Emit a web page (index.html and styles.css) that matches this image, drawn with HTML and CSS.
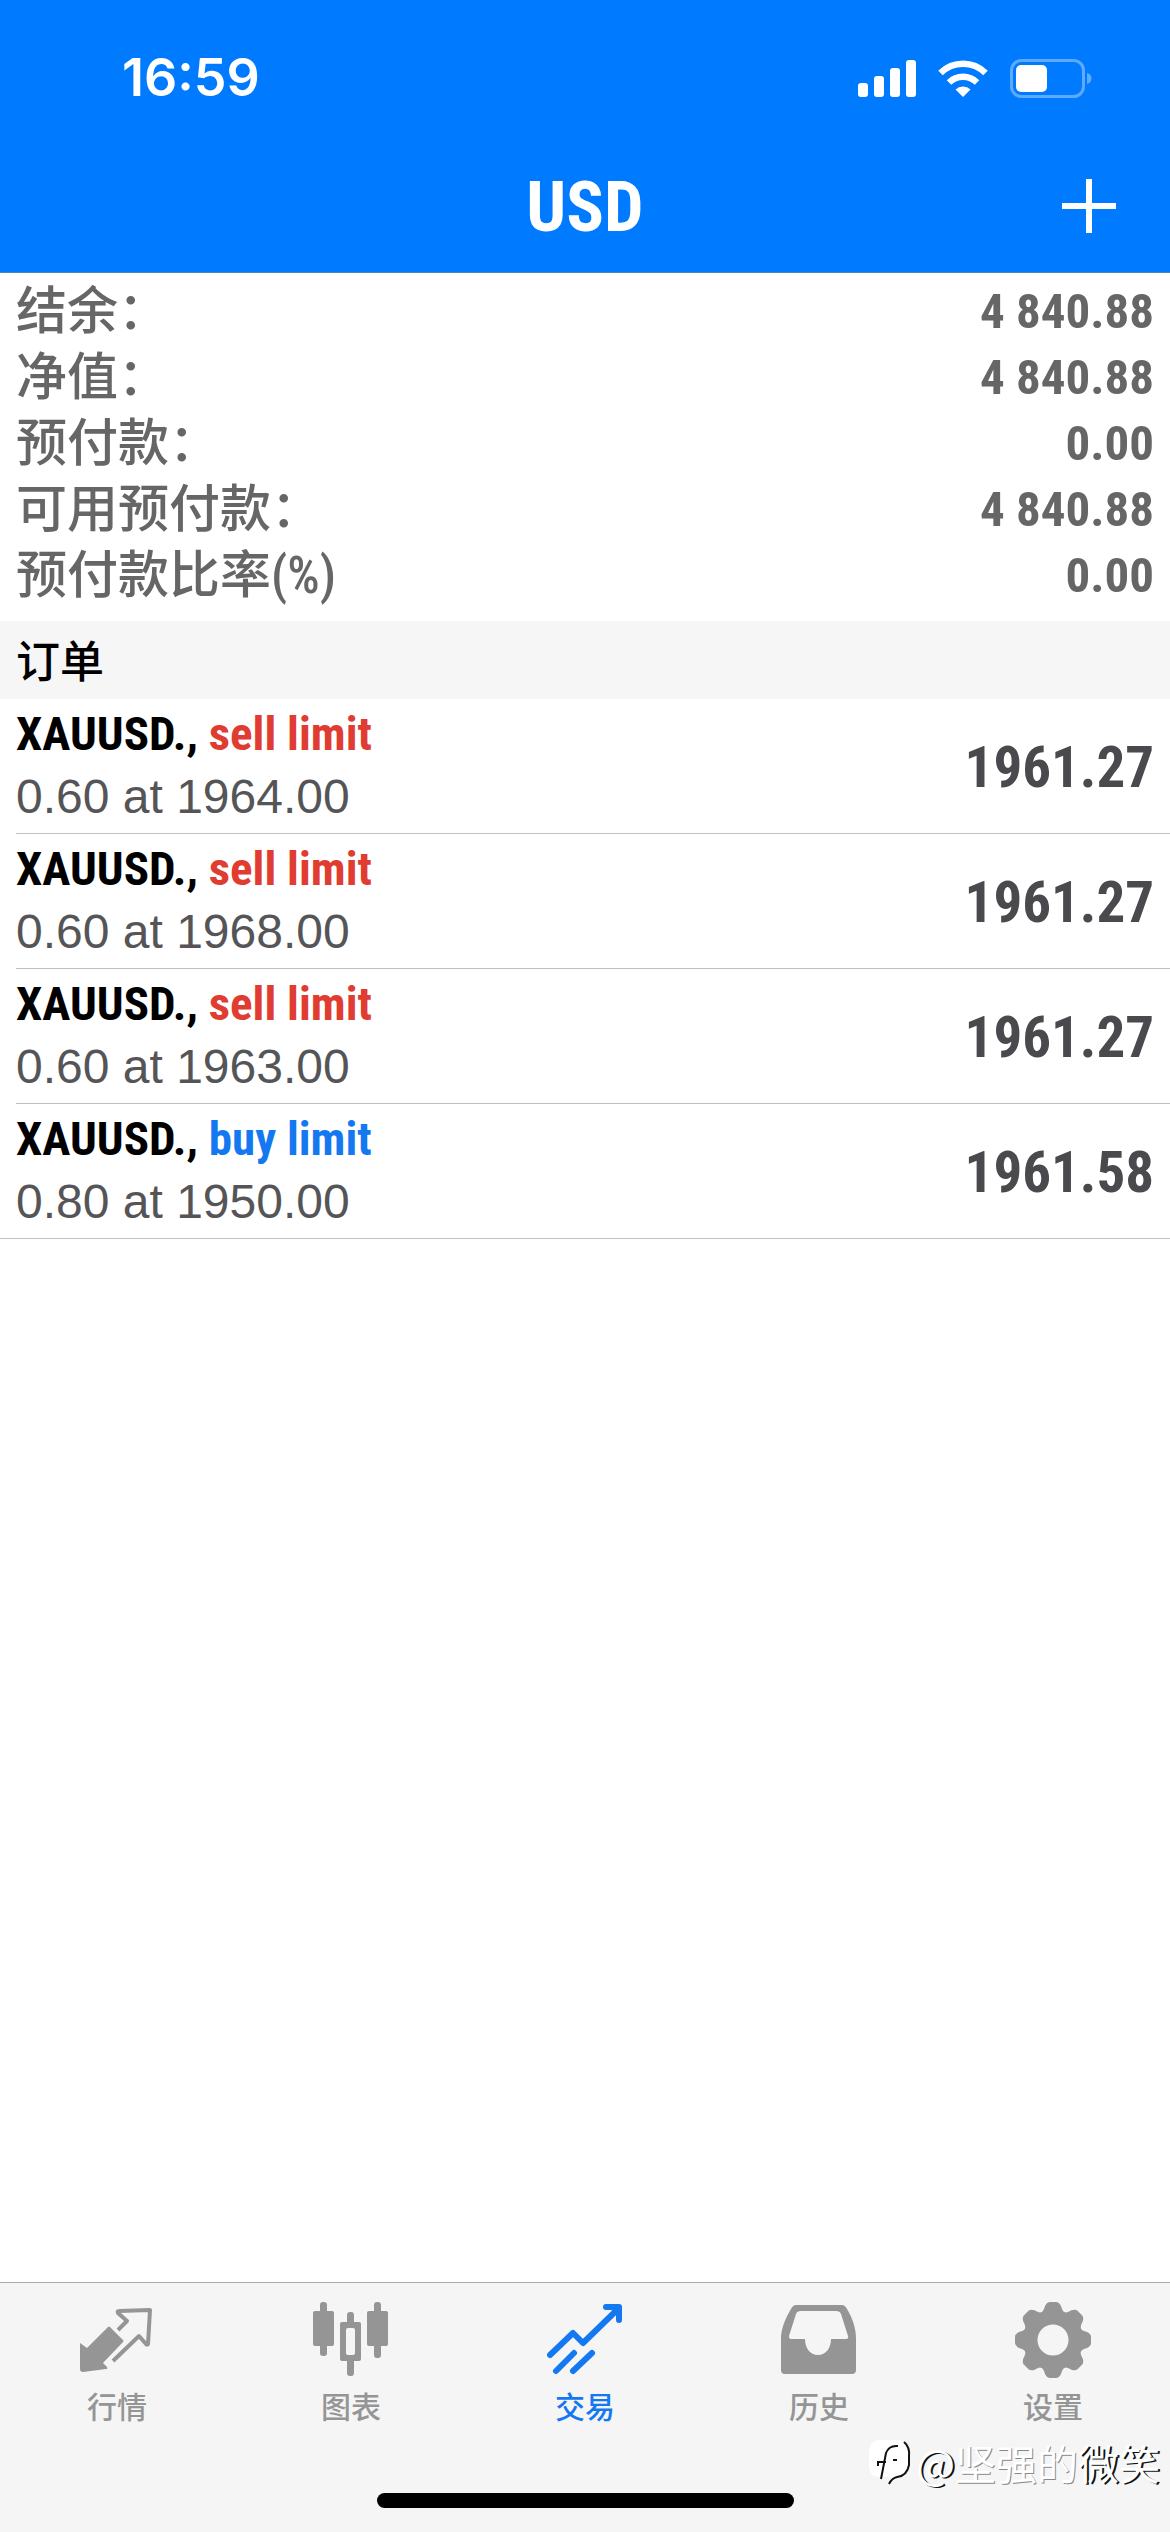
FILE: index.html
```html
<!DOCTYPE html>
<html lang="zh-CN">
<head>
<meta charset="utf-8">
<meta name="viewport" content="width=device-width, initial-scale=1">
<title>USD</title>
<link rel="stylesheet" href="styles.css">
</head>
<body>
<div class="app">
  <header class="header">
    <div class="status">
      <time class="clock">16:59</time>
      <div class="indicators">
        <svg class="signal" viewBox="0 0 58 37" width="58" height="37" fill="#fff" aria-hidden="true">
          <rect x="0" y="23" width="10" height="14" rx="3"/>
          <rect x="16" y="16" width="10" height="21" rx="3"/>
          <rect x="32" y="8" width="10" height="29" rx="3"/>
          <rect x="48" y="0" width="10" height="37" rx="3"/>
        </svg>
        <svg class="wifi" viewBox="0 0 50 37" width="50" height="37" aria-hidden="true">
          <path d="M2.500 13A32 32 0 0 1 47.500 13" fill="none" stroke="#fff" stroke-width="6.500"/>
          <path d="M11 22.500A20 20 0 0 1 39 22.500" fill="none" stroke="#fff" stroke-width="6.500"/>
          <path d="M17.500 29.500A11 11 0 0 1 32.500 29.500L25 37z" fill="#fff"/>
        </svg>
        <svg class="battery" viewBox="0 0 83 39" width="83" height="39" aria-hidden="true">
          <rect x="1.500" y="1.500" width="72" height="36" rx="10" fill="none" stroke="#5cabff" stroke-width="3"/>
          <path d="M77 14c6 1 6 10 0 11z" fill="#5cabff"/>
          <rect x="6" y="6" width="31" height="27" rx="5" fill="#fff"/>
        </svg>
      </div>
    </div>
    <div class="titlebar">
      <h1 class="title">USD</h1>
      <button class="add" type="button" aria-label="新订单">
        <svg viewBox="0 0 54 54" width="54" height="54" aria-hidden="true"><path d="M27 0v54M0 27h54" stroke="#fff" stroke-width="6"/></svg>
      </button>
    </div>
  </header>

  <main class="content">
    <dl class="account">
      <div class="account-row"><dt>结余：</dt><dd>4 840.88</dd></div>
      <div class="account-row"><dt>净值：</dt><dd>4 840.88</dd></div>
      <div class="account-row"><dt>预付款：</dt><dd>0.00</dd></div>
      <div class="account-row"><dt>可用预付款：</dt><dd>4 840.88</dd></div>
      <div class="account-row"><dt>预付款比率(%)</dt><dd>0.00</dd></div>
    </dl>
    <h2 class="section">订单</h2>
    <ul class="orders">
      <li class="order">
        <div class="order-info"><p class="symbol">XAUUSD., <span class="sell">sell limit</span></p><p class="volume">0.60 at 1964.00</p></div>
        <span class="price">1961.27</span>
      </li>
      <li class="order">
        <div class="order-info"><p class="symbol">XAUUSD., <span class="sell">sell limit</span></p><p class="volume">0.60 at 1968.00</p></div>
        <span class="price">1961.27</span>
      </li>
      <li class="order">
        <div class="order-info"><p class="symbol">XAUUSD., <span class="sell">sell limit</span></p><p class="volume">0.60 at 1963.00</p></div>
        <span class="price">1961.27</span>
      </li>
      <li class="order">
        <div class="order-info"><p class="symbol">XAUUSD., <span class="buy">buy limit</span></p><p class="volume">0.80 at 1950.00</p></div>
        <span class="price">1961.58</span>
      </li>
    </ul>
  </main>

  <footer class="footer">
    <nav class="tabs">
      <a class="tab" href="#quotes">
        <svg viewBox="0 0 76 76" width="76" height="76" aria-hidden="true">
          <path d="M1 41l7 5 21-21q1-1 2 0l13 13q1 1 0 2L24 61l4 4q1 2-1 2L4 70q-3 0-3-3z" fill="currentColor"/>
          <path d="M39 28l9-9-9-8q-1-2 1-2L71 8 69 42q-1 1-2 0L60 34 34 59" fill="none" stroke="currentColor" stroke-width="4" stroke-linejoin="round"/>
        </svg>
        <span>行情</span>
      </a>
      <a class="tab" href="#chart">
        <svg viewBox="0 0 76 76" width="76" height="76" aria-hidden="true">
          <g fill="currentColor">
            <rect x="7" y="0" width="7" height="54" rx="3"/><rect x="0" y="9" width="21" height="35" rx="2"/>
            <rect x="61" y="0" width="7" height="56" rx="3"/><rect x="54" y="9" width="21" height="35" rx="2"/>
            <rect x="34" y="10" width="7" height="14" rx="3"/><rect x="34" y="54" width="7" height="20" rx="3"/>
            <path fill-rule="evenodd" d="M29 20h17q2 0 2 2v35q0 2-2 2H29q-2 0-2-2V22q0-2 2-2zm6 6q-2 0-2 2v23q0 2 2 2h5q2 0 2-2V28q0-2-2-2z"/>
          </g>
        </svg>
        <span>图表</span>
      </a>
      <a class="tab active" href="#trade" aria-current="page">
        <svg viewBox="0 0 76 76" width="76" height="76" aria-hidden="true">
          <g fill="none" stroke="currentColor" stroke-width="6" stroke-linecap="round" stroke-linejoin="round">
            <path d="M3 53L26 31l10 10L72 6"/><path d="M59 5h13v13"/><path d="M9 69l18-18M26 69l19-18"/>
          </g>
          <path d="M62 5h10v12z" fill="currentColor"/>
        </svg>
        <span>交易</span>
      </a>
      <a class="tab" href="#history">
        <svg viewBox="0 0 76 76" width="76" height="76" aria-hidden="true">
          <path fill-rule="evenodd" fill="currentColor" d="M15 3h46q3 0 5 4c6 10 9 20 9 30v31q0 4-4 4H4q-4 0-4-4V37C0 27 4 17 10 7q2-4 5-4zm5 6q-4 0-5 3L8 34q0 3 2 3h14c0 9 5 16 13 16s13-7 13-16h15q3 0 2-3L60 12q-1-3-5-3z"/>
        </svg>
        <span>历史</span>
      </a>
      <a class="tab" href="#settings">
        <svg viewBox="0 0 76 76" width="76" height="76" aria-hidden="true">
          <g fill="currentColor">
            <path fill-rule="evenodd" d="M38 9a29 29 0 1 0 0 58a29 29 0 1 0 0-58zm0 13.500a15.500 15.500 0 1 1 0 31a15.500 15.500 0 1 1 0-31z"/>
            <path id="tooth" d="M25 11q3-1 4-4l1-3q2-4 5-4h6q3 0 5 4l1 3q1 3 4 4l-3 6H28z"/>
            <use href="#tooth" transform="rotate(45 38 38)"/>
            <use href="#tooth" transform="rotate(90 38 38)"/>
            <use href="#tooth" transform="rotate(135 38 38)"/>
            <use href="#tooth" transform="rotate(180 38 38)"/>
            <use href="#tooth" transform="rotate(225 38 38)"/>
            <use href="#tooth" transform="rotate(270 38 38)"/>
            <use href="#tooth" transform="rotate(315 38 38)"/>
          </g>
        </svg>
        <span>设置</span>
      </a>
    </nav>
    <div class="home-indicator"></div>
    <div class="watermark">
      <svg viewBox="0 0 48 48" width="48" height="48" aria-hidden="true">
        <path d="M10 2h22q9 2 9 14v10q0 12-12 13l-6 6-1-6H10Q1 38 1 28V14Q1 4 10 2z" fill="#fff"/>
        <g fill="none" stroke="#111" stroke-width="2"><path d="M36 4q6 5 5 14v9q-2 11-12 12-5 1-8 7"/><path d="M13 41l5-26q3-8 12-7M10 28v-4h8M25 22h4"/></g>
      </svg>
      <span>@<span class="faint">坚强的</span>微笑</span>
    </div>
  </footer>
</div>
</body>
</html>
```

FILE: styles.css
```css
* {
  box-sizing: border-box;
}

body,
h1,
h2,
p,
ul,
dl,
dd {
  margin: 0;
  padding: 0;
}

body {
  background: #fff;
  color: #000;
  font-family: "Liberation Sans", "Noto Sans CJK SC", sans-serif;
}

.app {
  display: flex;
  flex-direction: column;
  min-height: 100vh;
}

/* Header */
.header {
  background: #007aff;
  border-bottom: 1px solid #4a84c4;
  color: #fff;
}

.status {
  display: flex;
  align-items: center;
  justify-content: space-between;
  height: 156px;
  padding: 0 77px 0 122px;
}

.clock {
  font: 600 52px/60px Inter, sans-serif;
}

.indicators {
  display: flex;
  align-items: center;
  gap: 22px;
}

.titlebar {
  display: grid;
  grid-template-columns: 1fr auto 1fr;
  align-items: center;
  height: 116px;
  padding: 0 54px 16px;
}

.title {
  grid-column: 2;
  padding-top: 2px;
  font: bold 70px/98px "Roboto Condensed", Roboto, sans-serif;
}

.add {
  justify-self: end;
  display: flex;
  padding: 0;
  border: 0;
  background: none;
}

/* Account summary */
.content {
  flex: 1;
}

.account {
  padding: 6px 16px 12px;
  color: #666;
  font: bold 49px/66px "Roboto Condensed", Roboto, "Noto Sans CJK SC", sans-serif;
}

.account-row {
  display: flex;
  justify-content: space-between;
}

.account dt {
  font-size: 51px;
  font-weight: 500;
}

.account dd {
  padding-top: 3px;
  line-height: 60px;
}

.section {
  padding: 0 16px 2px;
  background: #f6f6f6;
  font: 500 44px/76px "Noto Sans CJK SC", sans-serif;
}

/* Orders */
.orders {
  border-bottom: 1px solid #c0c0c2;
  list-style: none;
}

.order {
  display: flex;
  align-items: center;
  justify-content: space-between;
  margin-left: 16px;
  padding: 3px 16px 5px 0;
  border-bottom: 1px solid #c0c0c2;
}

.order:last-child {
  border-bottom: 0;
}

.symbol {
  font: bold 47px/63px "Roboto Condensed", Roboto, sans-serif;
}

.volume {
  color: #555558;
  font-size: 48px;
  line-height: 63px;
}

.sell {
  color: #e03c31;
}

.buy {
  color: #1478f0;
}

.price {
  padding-top: 6px;
  color: #4a4a4e;
  font: bold 57px/72px "Roboto Condensed", Roboto, sans-serif;
}

/* Tab bar */
.footer {
  position: relative;
  padding-bottom: 24px;
  border-top: 1px solid #aaa;
  background: #f5f5f5;
}

.tabs {
  display: grid;
  grid-template-columns: repeat(5, 1fr);
  padding-top: 19px;
}

.tab {
  display: flex;
  flex-direction: column;
  align-items: center;
  gap: 6px;
  color: #959595;
  font: 500 30px/42px "Noto Sans CJK SC", sans-serif;
  text-decoration: none;
}

.active {
  color: #1478f0;
}

.home-indicator {
  width: 417px;
  height: 15px;
  margin: 67px auto 0;
  border-radius: 8px;
  background: #000;
}

.watermark {
  position: absolute;
  right: 10px;
  bottom: 43px;
  display: flex;
  align-items: center;
  color: #fff;
  font: 41px/54px "Noto Sans CJK SC", sans-serif;
  text-shadow: 2px 1px 0 #111;
}

.faint {
  text-shadow: 1px 1px 0 #888;
}
```
